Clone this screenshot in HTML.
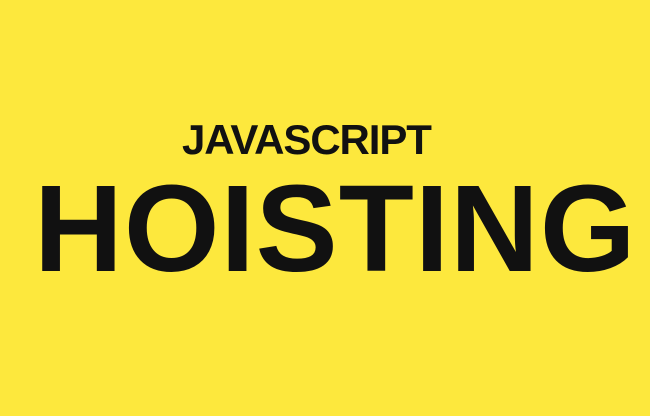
<!DOCTYPE html>
<html><head><style>
html,body{margin:0;padding:0}
body{width:650px;height:416px;background:#FDE83D;position:relative;overflow:hidden;font-family:"Liberation Sans",Arial,sans-serif;font-weight:bold;color:#111}
span{position:absolute;line-height:1;white-space:nowrap}
#a{left:182px;top:119px;font-size:42px;letter-spacing:-1.1px}
#b{left:34px;top:168px;font-size:123px;letter-spacing:1px}
</style></head><body>
<span id="a">JAVASCRIPT</span>
<span id="b">HOISTING</span>
</body></html>
